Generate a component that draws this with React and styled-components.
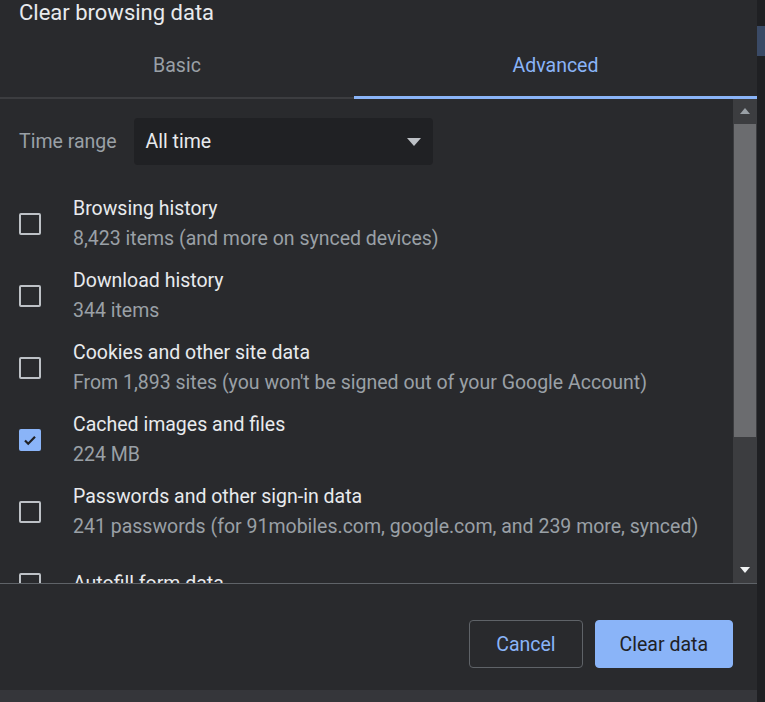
import React from "react";
import styled, { createGlobalStyle } from "styled-components";

const G = createGlobalStyle`
  html,body{margin:0;padding:0;background:#1f2023;}
  body{font-family:Roboto,"Liberation Sans",sans-serif;}
`;
const Page = styled.div`display:flex;width:765px;height:702px;overflow:hidden;`;
const Dialog = styled.div`width:757px;height:702px;background:#292a2d;display:flex;flex-direction:column;`;
const Side = styled.div`flex:1;background:#1f2023;display:flex;flex-direction:column;
  &::before{content:"";margin-top:26px;height:30px;background:#3a4a66;}`;
const Title = styled.div`color:#e8eaed;font-size:22px;padding:0 19px;height:30px;line-height:26px;`;
const Tabs = styled.div`display:flex;border-bottom:2px solid #3c3d40;height:67px;`;
const Tab = styled.div`flex:${p=>p.active?"1":"0 0 354px"};display:flex;align-items:center;justify-content:center;font-size:19.5px;
  color:${p=>p.active?"#8ab4f8":"#9aa0a6"};border-bottom:3px solid ${p=>p.active?"#8ab4f8":"transparent"};
  margin-bottom:-2px;padding-top:4px;box-sizing:border-box;`;
const Body = styled.div`display:flex;height:484px;border-bottom:1px solid #5f6368;`;
const Content = styled.div`flex:1;overflow:hidden;padding:19px 0 0 19px;`;
const Scroll = styled.div`width:24px;background:#3c3d40;display:flex;flex-direction:column;align-items:center;`;
const Thumb = styled.div`width:22px;margin-top:10px;height:313px;background:#6b6c6f;`;
const Arrow = styled.div`width:0;height:0;border-left:5px solid transparent;border-right:5px solid transparent;
  ${p=>p.up?"border-bottom:6px solid #9aa0a6;margin-top:9px;":"border-top:6px solid #f1f3f4;margin-top:auto;margin-bottom:10px;"}`;
const Range = styled.div`display:flex;align-items:center;gap:17px;margin-bottom:23px;`;
const Label = styled.span`color:#9aa0a6;font-size:19.5px;`;
const Select = styled.div`width:299px;height:47px;background:#202124;border-radius:4px;display:flex;align-items:center;
  justify-content:space-between;padding:0 12px;box-sizing:border-box;color:#e8eaed;font-size:19.5px;
  &::after{content:"";border-left:7px solid transparent;border-right:7px solid transparent;border-top:8px solid #bdc1c6;}`;
const Row = styled.div`display:flex;align-items:center;height:72px;`;
const Box = styled.div`width:18px;height:18px;border:2px solid ${p=>p.on?"#8ab4f8":"#bdc1c6"};background:${p=>p.on?"#8ab4f8":"transparent"};
  border-radius:2px;margin-right:32px;display:flex;align-items:center;justify-content:center;`;
const Texts = styled.div`display:flex;flex-direction:column;gap:8px;`;
const T1 = styled.div`color:#e8eaed;font-size:19.5px;line-height:22px;`;
const T2 = styled.div`color:#9aa0a6;font-size:19.5px;line-height:22px;`;
const Footer = styled.div`flex:1;display:flex;justify-content:flex-end;align-items:flex-start;gap:12px;padding:36px 24px 0 0;`;
const Btn = styled.button`height:48px;border-radius:4px;font-family:inherit;font-size:19.5px;padding:0 ${p=>p.primary?24:26}px;
  background:${p=>p.primary?"#8ab4f8":"transparent"};color:${p=>p.primary?"#202124":"#8ab4f8"};
  border:1px solid ${p=>p.primary?"#8ab4f8":"#5f6368"};`;
const Bottom = styled.div`height:12px;background:#35363a;`;

const items=[
 ["Browsing history","8,423 items (and more on synced devices)"],
 ["Download history","344 items"],
 ["Cookies and other site data","From 1,893 sites (you won't be signed out of your Google Account)"],
 ["Cached images and files","224 MB",true],
 ["Passwords and other sign-in data","241 passwords (for 91mobiles.com, google.com, and 239 more, synced)"],
 ["Autofill form data",""],
];

export default function App(){
  return <Page><G/>
    <Dialog>
      <Title>Clear browsing data</Title>
      <Tabs><Tab>Basic</Tab><Tab active>Advanced</Tab></Tabs>
      <Body>
        <Content>
          <Range><Label>Time range</Label><Select>All time</Select></Range>
          {items.map(([a,b,on])=><Row key={a}>
            <Box on={on}>{on&&<svg width="16" height="16" viewBox="0 0 16 16"><path d="M3 8.5l3.2 3.2L13 4.8" stroke="#202124" strokeWidth="2.2" fill="none"/></svg>}</Box>
            <Texts><T1>{a}</T1>{b&&<T2>{b}</T2>}</Texts>
          </Row>)}
        </Content>
        <Scroll><Arrow up/><Thumb/><Arrow/></Scroll>
      </Body>
      <Footer><Btn>Cancel</Btn><Btn primary>Clear data</Btn></Footer>
      <Bottom/>
    </Dialog>
    <Side/>
  </Page>;
}
